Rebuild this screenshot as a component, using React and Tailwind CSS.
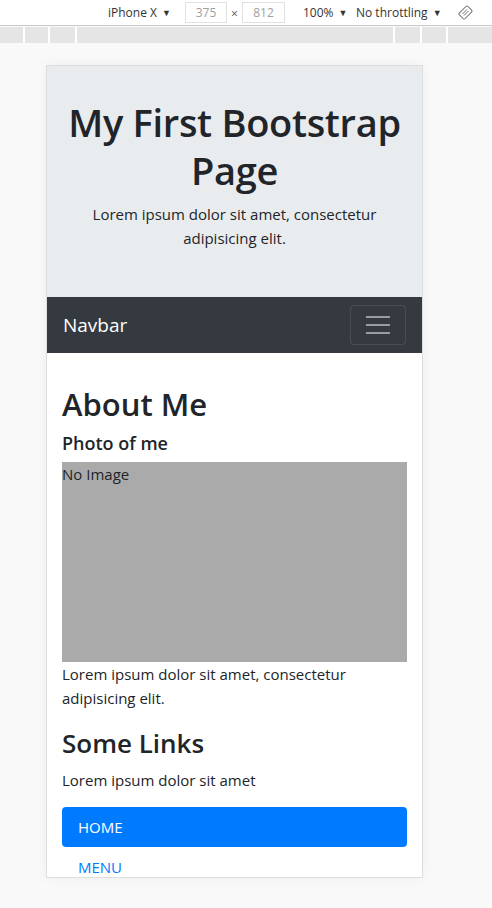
export default function App() {
  const rulerSegs = [23, 23, 25, 316, 25, 24, 44];
  return (
    <div className="w-[492px] h-[908px] bg-[#f9f9f9] overflow-hidden" style={{ fontFamily: '"Open Sans", sans-serif' }}>
      {/* devtools toolbar */}
      <div className="h-[26px] bg-white border-b border-[#cacaca] relative text-[12px] text-[#333]">
        <div className="absolute left-[108px] top-[4px] flex items-center gap-[5px]">
          <span>iPhone X</span>
          <span className="text-[9px]">▼</span>
        </div>
        <div className="absolute left-[185px] top-[2px] w-[42px] h-[21px] border border-[#e0e0e0] flex items-center justify-center text-[#a0a0a0]">375</div>
        <div className="absolute left-[231px] top-[5px] text-[#555]">×</div>
        <div className="absolute left-[242px] top-[2px] w-[43px] h-[21px] border border-[#e0e0e0] flex items-center justify-center text-[#a0a0a0]">812</div>
        <div className="absolute left-[303px] top-[4px] flex items-center gap-[5px]">
          <span>100%</span>
          <span className="text-[9px]">▼</span>
        </div>
        <div className="absolute left-[356px] top-[4px] flex items-center gap-[5px]">
          <span>No throttling</span>
          <span className="text-[9px]">▼</span>
        </div>
        <svg className="absolute left-[458px] top-[5px]" width="15" height="15" viewBox="0 0 15 15" fill="none" stroke="#707070" strokeWidth="1">
          <rect x="3.5" y="1.5" width="8" height="12" rx="1.5" transform="rotate(45 7.5 7.5)" />
          <line x1="4.5" y1="9" x2="9" y2="4.5" />
          <line x1="6" y1="10.5" x2="10.5" y2="6" />
        </svg>
      </div>
      {/* ruler */}
      <div className="mt-[1px] h-[16px] flex gap-[2px] bg-white">
        {rulerSegs.map((w, i) => (
          <div key={i} className="h-full bg-[#e5e5e5]" style={{ width: w }} />
        ))}
      </div>
      {/* device frame */}
      <div className="ml-[46px] mt-[22px] w-[377px] border border-[#dedede] shadow-[0_0_12px_rgba(0,0,0,0.05)] bg-white">
        <div className="h-[811px] overflow-hidden text-[#212529] text-[16px] leading-[1.5]" style={{ fontFamily: '"Open Sans", "Noto Sans", sans-serif' }}>
          {/* jumbotron */}
          <div className="bg-[#e9ecef] px-4 pt-[32px] pb-[31px] text-center">
            <h1 className="text-[38px] leading-[48px] font-semibold mb-2 tracking-[-0.3px]">My First Bootstrap Page</h1>
            <p className="mb-4 text-[15px] leading-[24px]">Lorem ipsum dolor sit amet, consectetur adipisicing elit.</p>
          </div>
          {/* navbar */}
          <div className="bg-[#343a40] h-[56px] px-4 flex items-center justify-between">
            <span className="text-white text-[19px] leading-[30px]">Navbar</span>
            <div className="w-[56px] h-[40px] border border-white/10 rounded-[4px] flex flex-col items-center justify-center gap-[6px]">
              <div className="w-[24px] h-[2px] bg-white/50" />
              <div className="w-[24px] h-[2px] bg-white/50" />
              <div className="w-[24px] h-[2px] bg-white/50" />
            </div>
          </div>
          {/* content */}
          <div className="px-[15px] pt-[32px]">
            <h2 className="text-[31px] leading-[38px] font-semibold mb-2">About Me</h2>
            <h5 className="text-[18px] leading-[24px] font-semibold mb-[7px]">Photo of me</h5>
            <div className="h-[200px] bg-[#aaaaaa] text-[15px] leading-[24px]">No Image</div>
            <p className="text-[15px] leading-[24px] mb-4">Lorem ipsum dolor sit amet, consectetur adipisicing elit.</p>
            <h3 className="text-[26px] leading-[34px] font-semibold mb-2">Some Links</h3>
            <p className="text-[15px] leading-[24px] mb-[15px]">Lorem ipsum dolor sit amet</p>
            <div className="flex flex-col">
              <div className="h-[40px] bg-[#007bff] rounded-[4px] px-4 flex items-center text-white text-[15px]">HOME</div>
              <div className="h-[40px] px-4 flex items-center text-[#007bff] text-[15px]">MENU</div>
            </div>
          </div>
        </div>
      </div>
    </div>
  );
}
